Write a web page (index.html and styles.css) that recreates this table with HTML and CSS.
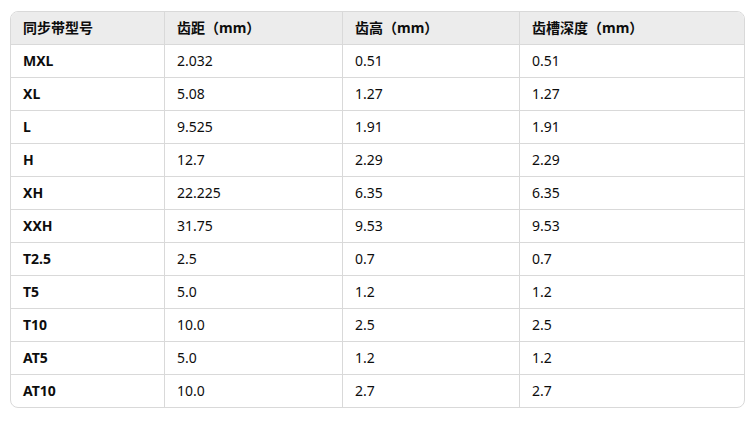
FILE: index.html
```html
<!DOCTYPE html>
<html lang="zh">
<head>
<meta charset="utf-8">
<link rel="stylesheet" href="styles.css">
</head>
<body>
<div class="wrap">
<table class="tbl">
<colgroup><col class="c1"><col class="c2"><col class="c3"><col class="c4"></colgroup>
<thead>
<tr><th>同步带型号</th><th>齿距（mm）</th><th>齿高（mm）</th><th>齿槽深度（mm）</th></tr>
</thead>
<tbody>
<tr><td class="k">MXL</td><td>2.032</td><td>0.51</td><td>0.51</td></tr>
<tr><td class="k">XL</td><td>5.08</td><td>1.27</td><td>1.27</td></tr>
<tr><td class="k">L</td><td>9.525</td><td>1.91</td><td>1.91</td></tr>
<tr><td class="k">H</td><td>12.7</td><td>2.29</td><td>2.29</td></tr>
<tr><td class="k">XH</td><td>22.225</td><td>6.35</td><td>6.35</td></tr>
<tr><td class="k">XXH</td><td>31.75</td><td>9.53</td><td>9.53</td></tr>
<tr><td class="k">T2.5</td><td>2.5</td><td>0.7</td><td>0.7</td></tr>
<tr><td class="k">T5</td><td>5.0</td><td>1.2</td><td>1.2</td></tr>
<tr><td class="k">T10</td><td>10.0</td><td>2.5</td><td>2.5</td></tr>
<tr><td class="k">AT5</td><td>5.0</td><td>1.2</td><td>1.2</td></tr>
<tr><td class="k">AT10</td><td>10.0</td><td>2.7</td><td>2.7</td></tr>
</tbody>
</table>
</div>
</body>
</html>
```
FILE: styles.css
```css
html, body {
  margin: 0;
  padding: 0;
  background: #ffffff;
}
body {
  font-family: "Noto Sans", "Noto Sans CJK SC", sans-serif;
  font-size: 14px;
  color: #0d0d0d;
}
.wrap {
  margin: 11px 0 0 10px;
  width: 735px;
  border: 1px solid #d9d9d9;
  border-radius: 8px;
  overflow: hidden;
  box-sizing: border-box;
}
.tbl {
  width: 100%;
  border-collapse: separate;
  border-spacing: 0;
  table-layout: fixed;
}
.c1 { width: 154px; }
.c2 { width: 178px; }
.c3 { width: 177px; }
.c4 { width: auto; }
.tbl th, .tbl td {
  height: 33px;
  box-sizing: border-box;
  padding: 0 12px;
  text-align: left;
  vertical-align: middle;
  border-right: 1px solid #d9d9d9;
  border-bottom: 1px solid #d9d9d9;
  line-height: 20px;
}
.tbl th:last-child, .tbl td:last-child { border-right: none; }
.tbl tbody tr:last-child td { border-bottom: none; height: 32px; }
.tbl th {
  background: #ececec;
  font-weight: 700;
}
.tbl td.k { font-weight: 700; }
```
